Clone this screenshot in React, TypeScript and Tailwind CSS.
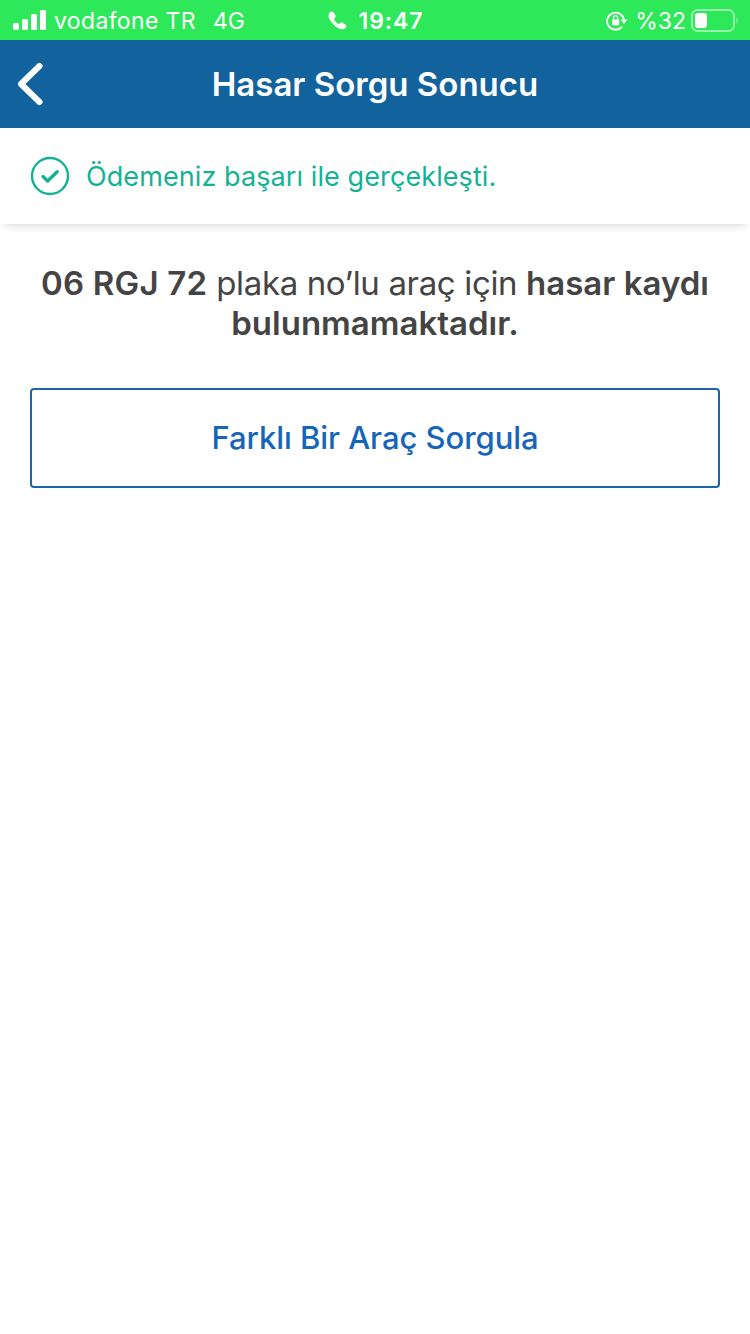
const SignalIcon = () => (
  <svg width="34" height="22" viewBox="0 0 34 22" fill="#fff">
    <rect x="0" y="13" width="6" height="7" rx="1.5" />
    <rect x="9" y="9" width="6" height="11" rx="1.5" />
    <rect x="18" y="4" width="6" height="16" rx="1.5" />
    <rect x="27" y="0" width="6" height="20" rx="1.5" />
  </svg>
);

const PhoneIcon = () => (
  <svg width="19" height="19" viewBox="0 0 19 19" fill="#fff">
    <path d="M2.1 1.3C3.3.2 4.4.2 5.3 1.3L7.3 4.1C8 5.1 7.8 6 7 6.9L6.3 7.7C6 8.1 6 8.4 6.3 8.9C7.3 10.4 8.7 11.8 10.2 12.8C10.6 13.1 11 13.1 11.3 12.8L12.1 12C13 11.2 13.9 11.1 14.9 11.8L17.6 13.7C18.6 14.5 18.7 15.6 17.6 16.8C15.5 19 12.8 18.8 8.8 16.2C6.6 14.7 4.1 12.3 2.6 10C0 6.1-.1 3.4 2.1 1.3Z" />
  </svg>
);

const RotationLockIcon = () => (
  <svg width="22" height="20" viewBox="0 0 22 20" fill="none">
    <path d="M16.1 15.7A8.5 8.5 0 1 1 18 9" stroke="#fff" strokeWidth="1.8" />
    <path d="M14.6 8.6H21.4L18 13Z" fill="#fff" />
    <rect x="6" y="8.4" width="7.2" height="5.8" rx="0.8" fill="#fff" />
    <path d="M7.5 9V6.9a2.1 2.3 0 0 1 4.2 0V9" stroke="#fff" strokeWidth="1.3" />
  </svg>
);

const BatteryIcon = () => (
  <svg width="48" height="24" viewBox="0 0 48 24" fill="none">
    <rect x="1" y="1" width="42" height="21" rx="5.5" stroke="#fff" strokeOpacity="0.5" strokeWidth="2" />
    <rect x="4" y="4" width="12" height="15" rx="3" fill="#fff" />
    <path d="M45.5 8.5C47.4 9.5 47.4 13.5 45.5 14.5Z" fill="#fff" fillOpacity="0.5" />
  </svg>
);

const StatusBar = () => (
  <div className="grid grid-cols-[1fr_auto_1fr] items-center h-10 bg-[#2de858] text-white text-[23px] leading-10">
    <div className="flex items-center pl-[13px]">
      <SignalIcon />
      <span className="ml-[7px] pt-px tracking-[0.35px]">vodafone TR</span>
      <span className="ml-[17px] pt-px">4G</span>
    </div>
    <div className="flex items-center gap-[11px] pl-0.5">
      <PhoneIcon />
      <span className="pt-px font-semibold tracking-[0.95px]">19:47</span>
    </div>
    <div className="flex items-center justify-end pr-[11px]">
      <RotationLockIcon />
      <span className="ml-[7px] mr-[5px] pt-px">%32</span>
      <BatteryIcon />
    </div>
  </div>
);

const Header = () => (
  <header className="grid grid-cols-[60px_1fr_60px] items-center h-[88px] bg-[#11629d] text-white">
    <button className="flex pl-[17px]" aria-label="Geri">
      <svg width="26" height="44" viewBox="0 0 26 44" fill="none">
        <path d="M22.5 4L4 22L22.5 40" stroke="#fff" strokeWidth="6" strokeLinecap="round" strokeLinejoin="round" />
      </svg>
    </button>
    <h1 className="pt-0.5 text-center text-[33px] font-semibold whitespace-nowrap">Hasar Sorgu Sonucu</h1>
  </header>
);

const SuccessMessage = () => (
  <div className="flex items-center h-24 px-[30px] bg-white text-[#14b294] shadow-[0_6px_8px_-4px_rgba(0,0,0,0.14)]">
    <svg width="40" height="40" viewBox="0 0 40 40" fill="none" stroke="currentColor">
      <circle cx="20" cy="20" r="18" strokeWidth="2.4" />
      <path d="M13 20.5L17.6 25L27.2 15.8" strokeWidth="3.4" strokeLinecap="round" strokeLinejoin="round" />
    </svg>
    <p className="ml-4 pt-[3px] text-[27px] tracking-[0.09px] whitespace-nowrap">Ödemeniz başarı ile gerçekleşti.</p>
  </div>
);

export default function App() {
  return (
    <div className="w-[750px] min-h-[1334px] bg-white font-['Inter',sans-serif]">
      <StatusBar />
      <Header />
      <SuccessMessage />

      <main className="px-[30px] pt-[39px]">
        <p className="text-center text-[33px] leading-10 tracking-[-0.36px] text-[#444]">
          <span className="font-semibold tracking-[0.2px]">06 RGJ 72</span> plaka no’lu araç için{' '}
          <span className="font-semibold tracking-[0px]">
            hasar kaydı
            <br />
            bulunmamaktadır.
          </span>
        </p>
        <button className="flex items-center justify-center w-full h-[100px] mt-[45px] border-2 border-[#1c65aa] rounded-[4px] text-[31px] font-medium tracking-[-0.05px] text-[#1565bb]">
          Farklı Bir Araç Sorgula
        </button>
      </main>
    </div>
  );
}
